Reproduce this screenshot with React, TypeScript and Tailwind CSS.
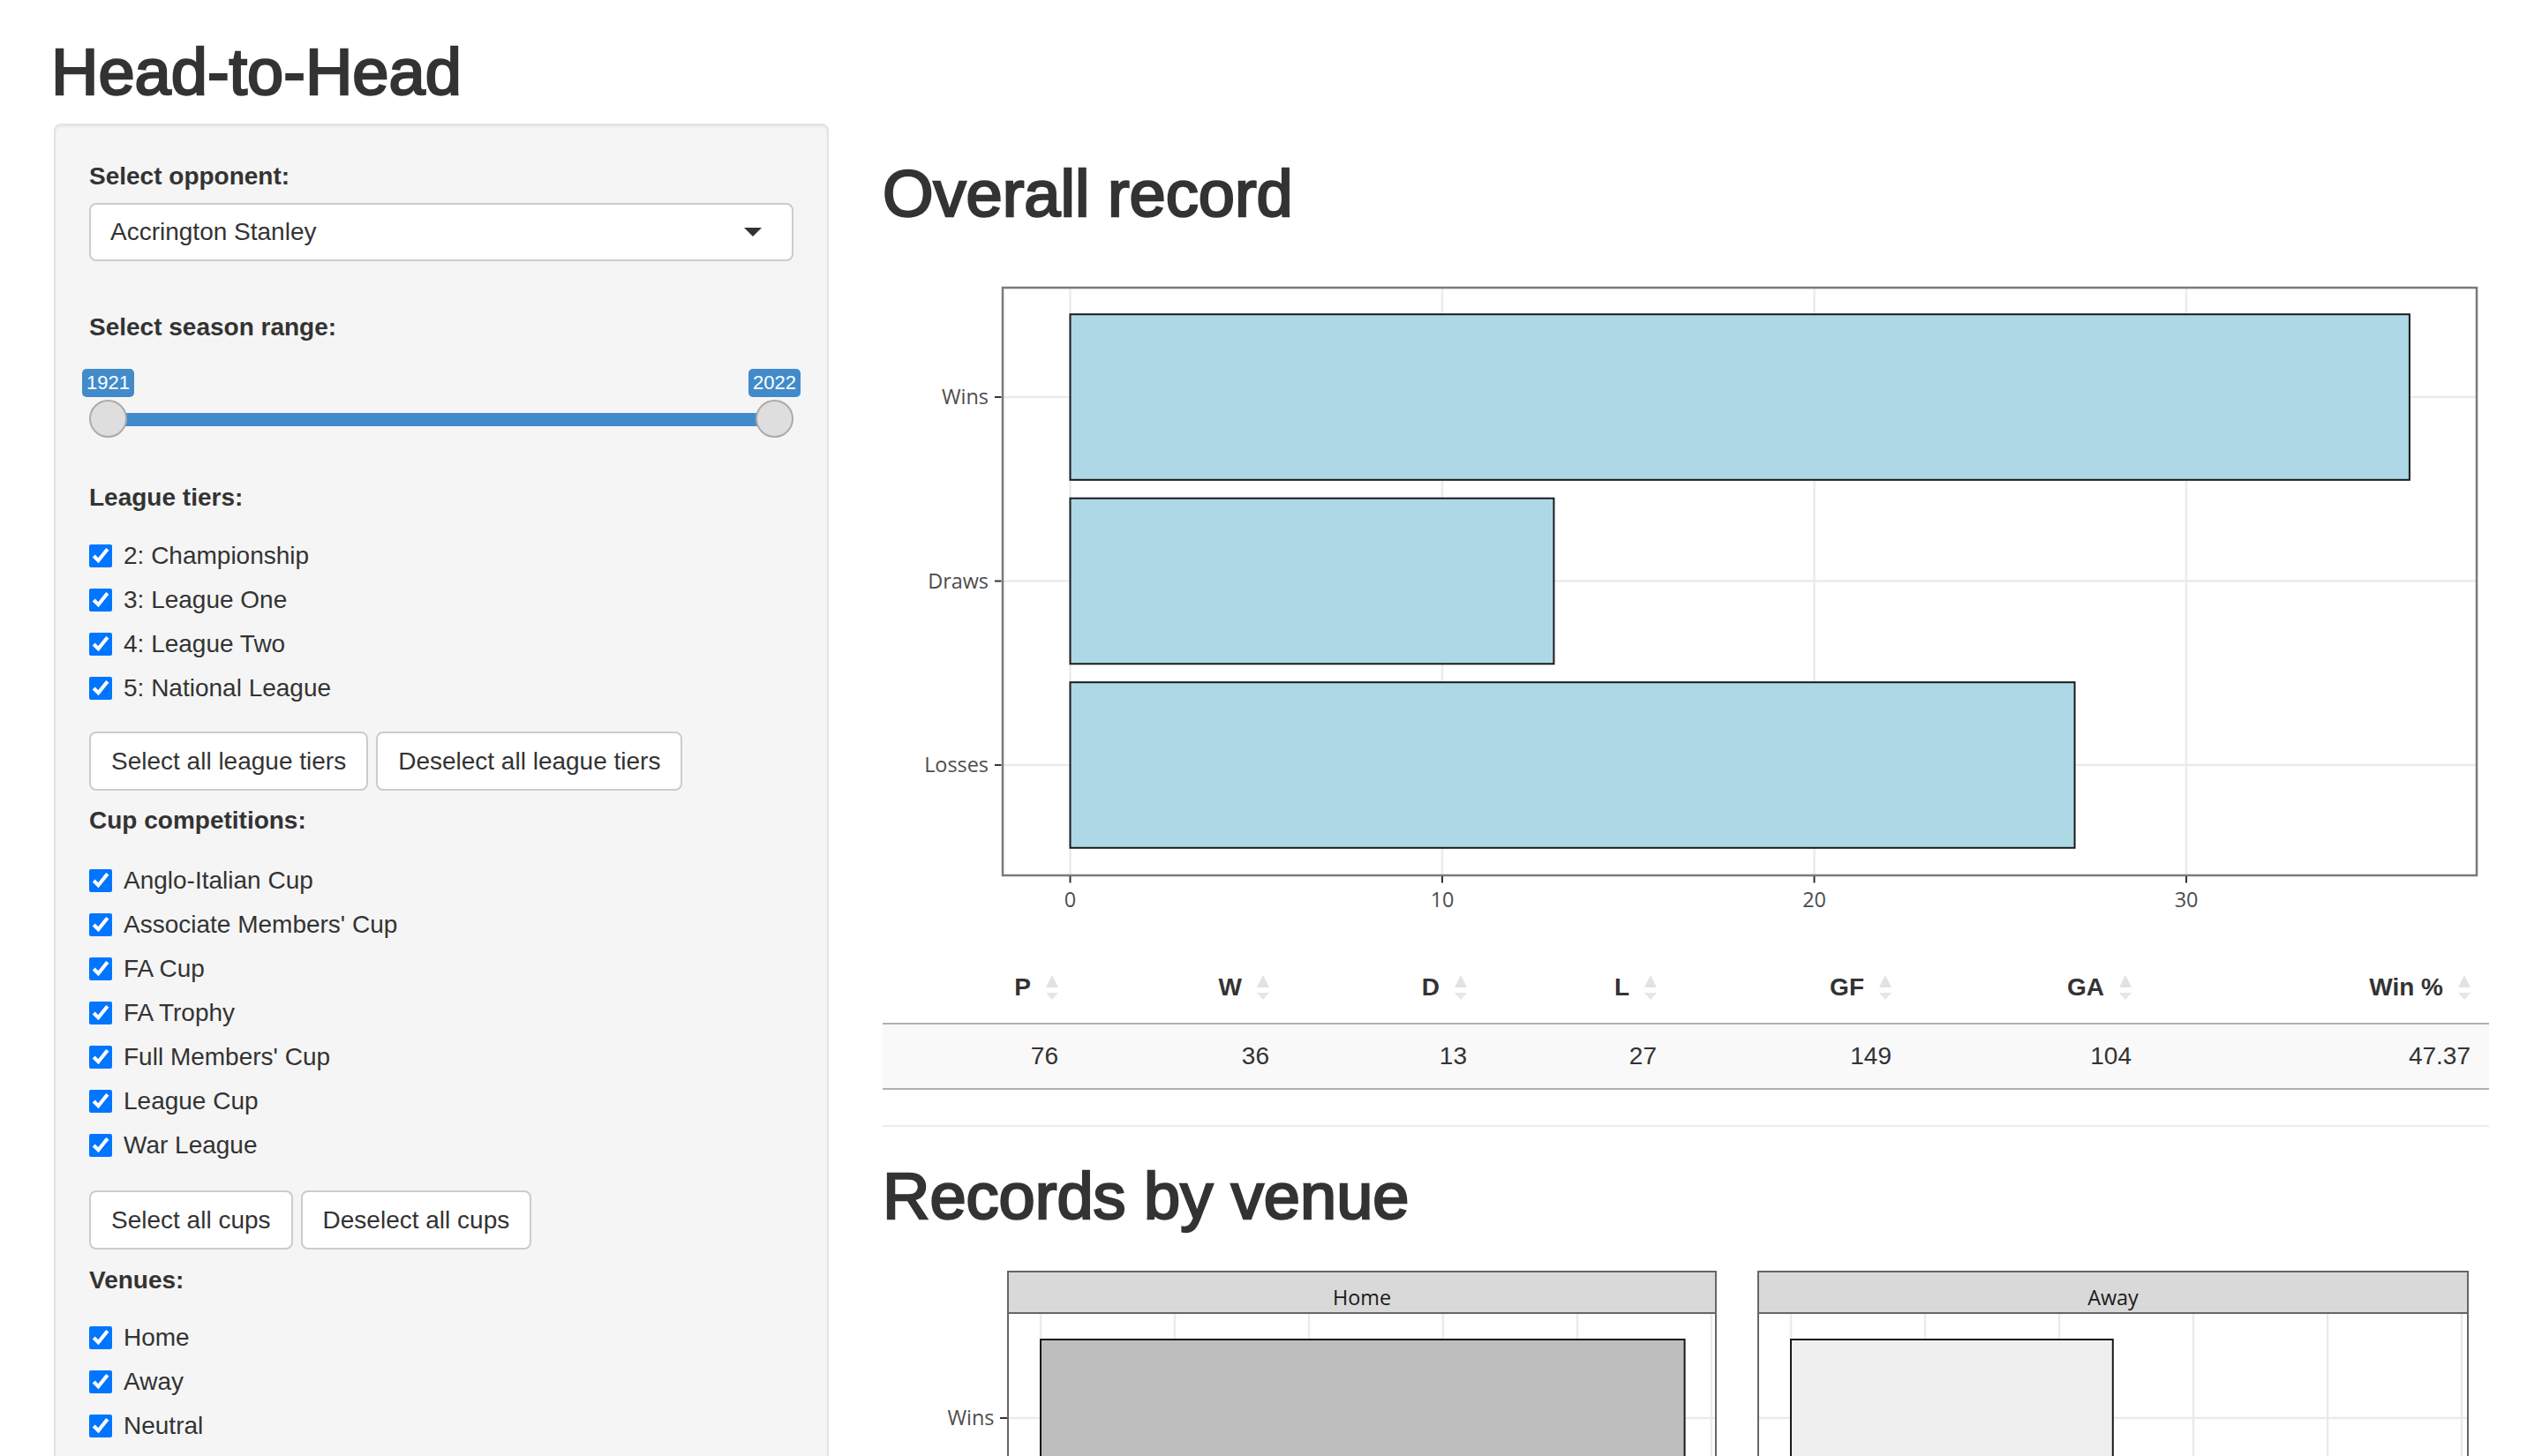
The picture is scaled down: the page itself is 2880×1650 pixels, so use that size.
import React from "react";

const tiers = ["2: Championship", "3: League One", "4: League Two", "5: National League"];
const cups = [
  "Anglo-Italian Cup",
  "Associate Members' Cup",
  "FA Cup",
  "FA Trophy",
  "Full Members' Cup",
  "League Cup",
  "War League",
];
const venues = ["Home", "Away", "Neutral"];

const overall = [
  { label: "Wins", v: 36 },
  { label: "Draws", v: 13 },
  { label: "Losses", v: 27 },
];

// right-aligned DataTables columns, widths in px
const cols = [
  { h: "P", v: "76", w: 220 },
  { h: "W", v: "36", w: 239 },
  { h: "D", v: "13", w: 224 },
  { h: "L", v: "27", w: 215 },
  { h: "GF", v: "149", w: 266 },
  { h: "GA", v: "104", w: 272 },
  { h: "Win %", v: "47.37", w: 384 },
];

// only the Wins row fits on screen
const byVenue = [
  { venue: "Home", x0: 142, x1: 944, fill: "#bebebe", wins: 24 },
  { venue: "Away", x0: 992, x1: 1796, fill: "#efefef", wins: 12 },
];

const plotFont = "'Open Sans', 'DejaVu Sans', sans-serif";

function Check({ label }: { label: string }) {
  return (
    <label className="flex h-[40px] items-center gap-[13px]">
      <input type="checkbox" defaultChecked className="m-0 h-[26px] w-[26px] accent-[#0075ff]" />
      <span>{label}</span>
    </label>
  );
}

function Btn({ children }: { children: React.ReactNode }) {
  return (
    <button className="h-[67px] rounded-[8px] border-2 border-[#cccccc] bg-white px-[23px] text-[28px] leading-[40px] text-[#333]">
      {children}
    </button>
  );
}

function SortIcon() {
  return (
    <svg width="16" height="30" viewBox="0 0 16 30" className="absolute right-[20px] top-1/2 -translate-y-1/2">
      <polygon points="1,15 8,1 15,15" fill="#e2e2e2" />
      <polygon points="1,21 15,21 8,29" fill="#e6e6e6" />
    </svg>
  );
}

function OverallPlot() {
  const x0 = 212.5;
  const k = 42.15;
  const centers = [170, 378.5, 587];
  return (
    <svg width="1820" height="799" viewBox="0 0 1820 799" className="block">
      <rect x="136" y="46" width="1670" height="666" fill="#ffffff" />
      {[0, 10, 20, 30].map((t) => (
        <line key={t} x1={x0 + t * k} x2={x0 + t * k} y1="46" y2="712" stroke="#ebebeb" strokeWidth="2.5" />
      ))}
      {centers.map((c) => (
        <line key={c} x1="136" x2="1806" y1={c} y2={c} stroke="#ebebeb" strokeWidth="2.5" />
      ))}
      {overall.map((r, i) => (
        <rect
          key={r.label}
          x={x0}
          y={centers[i] - 93.8}
          width={r.v * k}
          height={187.6}
          fill="#add8e6"
          stroke="#1a1a1a"
          strokeWidth="2"
        />
      ))}
      <rect x="136" y="46" width="1670" height="666" fill="none" stroke="#7a7a7a" strokeWidth="2.5" />
      {overall.map((r, i) => (
        <g key={r.label}>
          <line x1="127" x2="134.5" y1={centers[i]} y2={centers[i]} stroke="#333" strokeWidth="2" />
          <text
            x="120"
            y={centers[i] + 8}
            textAnchor="end"
            fontSize="23.4"
            fill="#4d4d4d"
            fontFamily={plotFont}
          >
            {r.label}
          </text>
        </g>
      ))}
      {[0, 10, 20, 30].map((t) => (
        <g key={t}>
          <line x1={x0 + t * k} x2={x0 + t * k} y1="713" y2="720.5" stroke="#333" strokeWidth="2" />
          <text x={x0 + t * k} y="748" textAnchor="middle" fontSize="23.4" fill="#4d4d4d" fontFamily={plotFont}>
            {t}
          </text>
        </g>
      ))}
    </svg>
  );
}

function VenuePlot() {
  const k = 30.4;
  const wins = 187;
  return (
    <svg width="1820" height="240" viewBox="0 0 1820 240" className="block">
      {byVenue.map((p) => {
        const zero = p.x0 + 37;
        return (
          <g key={p.venue}>
            <rect x={p.x0} y="68" width={p.x1 - p.x0} height="180" fill="#ffffff" />
            {[0, 5, 10, 15, 20, 25].map((t) => (
              <line key={t} x1={zero + t * k} x2={zero + t * k} y1="68" y2="240" stroke="#ebebeb" strokeWidth="2.5" />
            ))}
            <line x1={p.x0} x2={p.x1} y1={wins} y2={wins} stroke="#ebebeb" strokeWidth="2.5" />
            <rect
              x={zero}
              y={wins - 89}
              width={p.wins * k}
              height="178"
              fill={p.fill}
              stroke="#1a1a1a"
              strokeWidth="2"
            />
            <rect x={p.x0} y="68" width={p.x1 - p.x0} height="200" fill="none" stroke="#666" strokeWidth="2" />
            <rect x={p.x0} y="21" width={p.x1 - p.x0} height="47" fill="#d9d9d9" stroke="#666" strokeWidth="2" />
            <text
              x={(p.x0 + p.x1) / 2}
              y="59"
              textAnchor="middle"
              fontSize="23.4"
              fill="#1a1a1a"
              fontFamily={plotFont}
            >
              {p.venue}
            </text>
          </g>
        );
      })}
      <line x1="133" x2="141" y1={wins} y2={wins} stroke="#333" strokeWidth="2" />
      <text x="126.5" y={wins + 8} textAnchor="end" fontSize="23.4" fill="#4d4d4d" fontFamily={plotFont}>
        Wins
      </text>
    </svg>
  );
}

export default function App() {
  return (
    <div className="h-[1650px] overflow-hidden bg-white font-['Liberation_Sans',Arial,sans-serif] text-[28px] leading-[40px] text-[#333]">
      <h1 className="ml-[58px] pt-[41px] text-[74px] leading-[81px] [-webkit-text-stroke:2.5px_#333]">
        Head-to-Head
      </h1>

      <div className="mt-[18px] flex items-start gap-[61px] pl-[61px]">
        {/* sidebar */}
        <div className="w-[878px] shrink-0 rounded-[8px] border-2 border-[#e3e3e3] bg-[#f5f5f5] px-[38px] pb-[40px] pt-[38px] shadow-[inset_0_2px_2px_rgba(0,0,0,0.05)]">
          <div className="font-bold">Select opponent:</div>
          <div className="mt-[10px] flex h-[66px] items-center justify-between rounded-[8px] border-2 border-[#cccccc] bg-white pl-[22px] pr-[34px]">
            <span>Accrington Stanley</span>
            <svg width="20" height="10" viewBox="0 0 20 10">
              <polygon points="0,0 20,0 10,10" fill="#333" />
            </svg>
          </div>

          <div className="mt-[55px] font-bold">Select season range:</div>
          <div className="relative h-[153px] pt-[77px]">
            <div className="absolute left-[-8px] top-[27px] h-[32px] rounded-[5px] bg-[#428bca] px-[5px] text-[22px] leading-[32px] text-white">
              1921
            </div>
            <div className="absolute right-[-8px] top-[27px] h-[32px] rounded-[5px] bg-[#428bca] px-[5px] text-[22px] leading-[32px] text-white">
              2022
            </div>
            <div className="mx-[21px] h-[15px] bg-[#428bca]" />
            <div className="absolute left-0 top-[62px] h-[43px] w-[43px] rounded-full border-2 border-[#ababab] bg-[#dedede]" />
            <div className="absolute right-0 top-[62px] h-[43px] w-[43px] rounded-full border-2 border-[#ababab] bg-[#dedede]" />
          </div>

          <div className="font-bold">League tiers:</div>
          <div className="mt-[26px] flex flex-col gap-[10px]">
            {tiers.map((t) => (
              <Check key={t} label={t} />
            ))}
          </div>
          <div className="mt-[29px] flex gap-[9px]">
            <Btn>Select all league tiers</Btn>
            <Btn>Deselect all league tiers</Btn>
          </div>

          <div className="mt-[14px] font-bold">Cup competitions:</div>
          <div className="mt-[28px] flex flex-col gap-[10px]">
            {cups.map((c) => (
              <Check key={c} label={c} />
            ))}
          </div>
          <div className="mt-[31px] flex gap-[9px]">
            <Btn>Select all cups</Btn>
            <Btn>Deselect all cups</Btn>
          </div>

          <div className="mt-[15px] font-bold">Venues:</div>
          <div className="mt-[25px] flex flex-col gap-[10px]">
            {venues.map((v) => (
              <Check key={v} label={v} />
            ))}
          </div>
        </div>

        {/* main */}
        <div className="w-[1820px] shrink-0">
          <h2 className="pt-[39px] text-[74px] leading-[81px] [-webkit-text-stroke:2.5px_#333]">Overall record</h2>
          <div className="mt-[20px]">
            <OverallPlot />
          </div>

          <div className="flex border-b-2 border-[#b0b0b0] font-bold">
            {cols.map((c) => (
              <div
                key={c.h}
                className="relative h-[80px] shrink-0 pr-[52px] text-right leading-[80px]"
                style={{ width: c.w }}
              >
                {c.h}
                <SortIcon />
              </div>
            ))}
          </div>
          <div className="flex border-b-2 border-[#b0b0b0] bg-[#f9f9f9]">
            {cols.map((c) => (
              <div
                key={c.h}
                className="h-[72px] shrink-0 pr-[21px] text-right leading-[72px]"
                style={{ width: c.w }}
              >
                {c.v}
              </div>
            ))}
          </div>

          <div className="mt-[40px] border-t-2 border-[#eeeeee]" />

          <h2 className="pt-[38px] text-[74px] leading-[81px] [-webkit-text-stroke:2.5px_#333]">Records by venue</h2>
          <div className="mt-[24px]">
            <VenuePlot />
          </div>
        </div>
      </div>
    </div>
  );
}
